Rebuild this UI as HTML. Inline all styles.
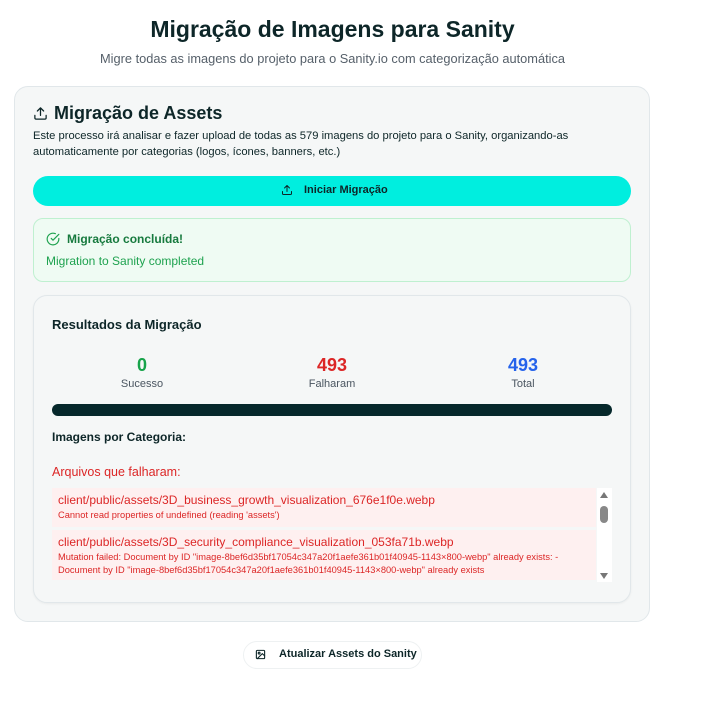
<!DOCTYPE html>
<html><head><meta charset="utf-8"><style>
*{box-sizing:border-box;margin:0;padding:0}
body{width:705px;height:705px;background:#fff;font-family:"Liberation Sans",sans-serif;color:#0d2628;position:relative;overflow:hidden}
.a{position:absolute;white-space:nowrap}
</style></head><body>
<div class="a" style="left:0;width:665px;top:16px;text-align:center;font-size:23px;font-weight:bold">Migração de Imagens para Sanity</div>
<div class="a" style="left:0;width:665px;top:51px;text-align:center;font-size:12.8px;color:#56606a">Migre todas as imagens do projeto para o Sanity.io com categorização automática</div>

<div class="a" style="left:14px;top:86px;width:636px;height:536px;border:1px solid #e1e7ea;border-radius:14px;background:#f5f7f7"></div>
<svg class="a" style="left:33px;top:106px" width="15" height="15" viewBox="0 0 24 24" fill="none" stroke="#0d2628" stroke-width="2" stroke-linecap="round" stroke-linejoin="round"><path d="M21 15v4a2 2 0 0 1-2 2H5a2 2 0 0 1-2-2v-4M17 8l-5-5-5 5M12 3v12"/></svg>
<div class="a" style="left:54px;top:103px;font-size:18px;font-weight:bold">Migração de Assets</div>
<div class="a" style="left:33px;top:128px;font-size:11.2px;line-height:16px">Este processo irá analisar e fazer upload de todas as 579 imagens do projeto para o Sanity, organizando-as<br>automaticamente por categorias (logos, ícones, banners, etc.)</div>

<div class="a" style="left:33px;top:176px;width:598px;height:30px;border-radius:15px;background:#00eedf"></div>
<svg class="a" style="left:281px;top:184px" width="12" height="12" viewBox="0 0 24 24" fill="none" stroke="#0d2628" stroke-width="2" stroke-linecap="round" stroke-linejoin="round"><path d="M21 15v4a2 2 0 0 1-2 2H5a2 2 0 0 1-2-2v-4M17 8l-5-5-5 5M12 3v12"/></svg>
<div class="a" style="left:304px;top:184px;font-size:11px;font-weight:bold">Iniciar Migração</div>

<div class="a" style="left:33px;top:218px;width:598px;height:64px;border:1px solid #bff0d0;border-radius:10px;background:#effbf3"></div>
<svg class="a" style="left:46px;top:232px" width="14" height="14" viewBox="0 0 24 24" fill="none" stroke="#1ea24f" stroke-width="2" stroke-linecap="round" stroke-linejoin="round"><path d="M22 11.1V12a10 10 0 1 1-5.9-9.1"/><path d="M22 4 12 14l-3-3"/></svg>
<div class="a" style="left:67px;top:232px;font-size:12px;font-weight:bold;color:#177a3e">Migração concluída!</div>
<div class="a" style="left:46px;top:254px;font-size:12px;color:#1ea24f">Migration to Sanity completed</div>

<div class="a" style="left:33px;top:295px;width:598px;height:308px;border:1px solid #e1e7ea;border-radius:14px;background:#f5f7f7;box-shadow:0 1px 2px rgba(0,0,0,.05)"></div>
<div class="a" style="left:52px;top:317px;font-size:13px;font-weight:bold">Resultados da Migração</div>
<div class="a" style="left:92px;width:100px;top:355px;text-align:center;font-size:18px;font-weight:bold;color:#17a34a">0</div>
<div class="a" style="left:92px;width:100px;top:378px;text-align:center;font-size:11px;color:#4a5560">Sucesso</div>
<div class="a" style="left:282px;width:100px;top:355px;text-align:center;font-size:18px;font-weight:bold;color:#dc2626">493</div>
<div class="a" style="left:282px;width:100px;top:378px;text-align:center;font-size:11px;color:#4a5560">Falharam</div>
<div class="a" style="left:473px;width:100px;top:355px;text-align:center;font-size:18px;font-weight:bold;color:#2563eb">493</div>
<div class="a" style="left:473px;width:100px;top:378px;text-align:center;font-size:11px;color:#4a5560">Total</div>
<div class="a" style="left:52px;top:404px;width:560px;height:12px;border-radius:6px;background:#06282b"></div>
<div class="a" style="left:52px;top:430px;font-size:12px;font-weight:bold">Imagens por Categoria:</div>
<div class="a" style="left:52px;top:465px;font-size:12.5px;color:#dc2626">Arquivos que falharam:</div>

<div class="a" style="left:52px;top:488px;width:544px;height:39px;background:#fef0f0"></div>
<div class="a" style="left:58px;top:493px;font-size:12px;color:#dc2626">client/public/assets/3D_business_growth_visualization_676e1f0e.webp</div>
<div class="a" style="left:58px;top:510px;font-size:9.3px;color:#dc2626">Cannot read properties of undefined (reading 'assets')</div>
<div class="a" style="left:52px;top:530px;width:544px;height:50px;background:#fef0f0"></div>
<div class="a" style="left:58px;top:535px;font-size:12px;color:#dc2626">client/public/assets/3D_security_compliance_visualization_053fa71b.webp</div>
<div class="a" style="left:58px;top:551px;font-size:9.3px;line-height:12.5px;color:#dc2626">Mutation failed: Document by ID "image-8bef6d35bf17054c347a20f1aefe361b01f40945-1143×800-webp" already exists: -<br>Document by ID "image-8bef6d35bf17054c347a20f1aefe361b01f40945-1143×800-webp" already exists</div>
<div class="a" style="left:597px;top:488px;width:15px;height:94px;background:#fff"></div>
<div class="a" style="left:600px;top:492px;width:0;height:0;border-left:4.5px solid transparent;border-right:4.5px solid transparent;border-bottom:6px solid #777"></div>
<div class="a" style="left:600px;top:506px;width:8px;height:17px;border-radius:4px;background:#888"></div>
<div class="a" style="left:600px;top:573px;width:0;height:0;border-left:4.5px solid transparent;border-right:4.5px solid transparent;border-top:6px solid #777"></div>

<div class="a" style="left:243px;top:641px;width:179px;height:28px;border:1px solid #eef1f2;border-radius:14px;background:#fff"></div>
<svg class="a" style="left:255px;top:649px" width="11" height="11" viewBox="0 0 24 24" fill="none" stroke="#0d2628" stroke-width="2.4" stroke-linecap="round" stroke-linejoin="round"><rect x="3" y="3" width="18" height="18" rx="2"/><circle cx="9" cy="9" r="2"/><path d="m21 15-5-5L5 21"/></svg>
<div class="a" style="left:279px;top:648px;font-size:11px;font-weight:bold">Atualizar Assets do Sanity</div>
</body></html>
